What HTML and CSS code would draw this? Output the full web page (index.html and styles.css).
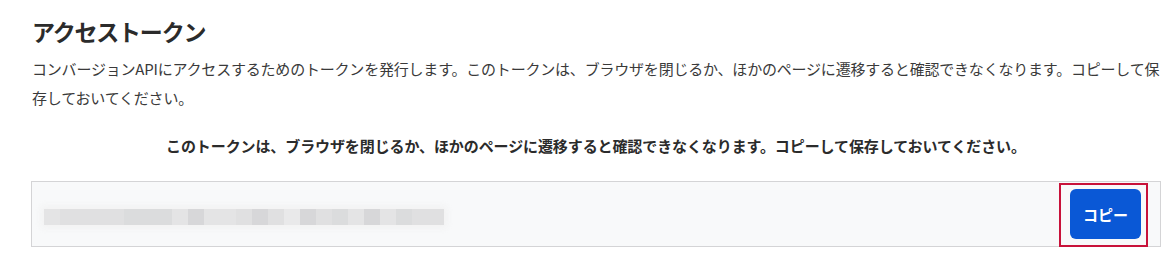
FILE: index.html
```html
<!DOCTYPE html>
<html lang="ja">
<head>
<meta charset="utf-8">
<title>アクセストークン</title>
<link rel="stylesheet" href="styles.css">
</head>
<body>
<main class="page">
  <h1 class="title">アクセストークン</h1>
  <p class="desc">コンバージョンAPIにアクセスするためのトークンを発行します。このトークンは、ブラウザを閉じるか、ほかのページに遷移すると確認できなくなります。コピーして保存しておいてください。</p>
  <p class="notice">このトークンは、ブラウザを閉じるか、ほかのページに遷移すると確認できなくなります。コピーして保存しておいてください。</p>
  <div class="token-box">
    <div class="token" aria-label="トークン（非表示）">
      <span class="b4"></span><span class="b3"></span><span class="b3"></span><span class="b3"></span><span class="b3"></span>
      <span class="b2"></span><span class="b2"></span><span class="b2"></span><span class="b4"></span><span class="b1"></span>
      <span class="b4"></span><span class="b4"></span><span class="b3"></span><span class="b1"></span><span class="b3"></span>
      <span class="b5"></span><span class="b1"></span><span class="b3"></span><span class="b2"></span><span class="b4"></span>
      <span class="b1"></span><span class="b4"></span><span class="b2"></span><span class="b3"></span><span class="b3"></span>
    </div>
    <div class="copy-wrap">
      <button class="copy-btn" type="button">コピー</button>
      <span class="highlight" aria-hidden="true"></span>
    </div>
  </div>
</main>
</body>
</html>
```

FILE: styles.css
```css
* { box-sizing: border-box; }

html, body {
  margin: 0;
  padding: 0;
  background: #ffffff;
}

body {
  font-family: "Noto Sans CJK JP", "Noto Sans", sans-serif;
  color: #333333;
}

.page {
  width: 1130px;
  margin-left: 31px;
  padding-top: 13px;
}

.title {
  margin: 0 0 0 1px;
  font-size: 23px;
  line-height: 36px;
  font-weight: 700;
  letter-spacing: -1.2px;
  color: #2b2b2b;
}

.desc {
  margin: 5px 0 0 1px;
  font-size: 15px;
  line-height: 29px;
  letter-spacing: -0.2px;
  color: #3a3a3a;
}

.notice {
  margin: 22px 0 0 0;
  text-align: center;
  font-size: 15px;
  line-height: 24px;
  font-weight: 700;
  letter-spacing: -0.1px;
  color: #2b2b2b;
}

.token-box {
  margin-top: 23px;
  height: 66px;
  border: 1px solid #d4d4d6;
  background: #f8f9fa;
  display: flex;
  align-items: center;
  justify-content: space-between;
  padding: 0 19px 0 12px;
}

.token {
  display: flex;
  height: 16px;
  margin-top: 6px;
  box-shadow: 0 0 6px 3px rgba(240, 240, 240, 0.8);
}

.token span {
  width: 16px;
  height: 16px;
}

.token .b1 { background: #d7d7d9; }
.token .b2 { background: #dbdcdd; }
.token .b3 { background: #e0e0e1; }
.token .b4 { background: #e4e4e5; }
.token .b5 { background: #e9e9ea; }

.copy-wrap {
  position: relative;
  display: flex;
}

.copy-btn {
  width: 71px;
  height: 50px;
  border: none;
  border-radius: 6px;
  background: #0a58d6;
  color: #ffffff;
  font-family: inherit;
  font-size: 15px;
  font-weight: 700;
  cursor: pointer;
}

.highlight {
  position: absolute;
  left: -11px;
  top: -6px;
  right: -7px;
  bottom: -8px;
  border: 2px solid #c8123a;
  pointer-events: none;
}
```
